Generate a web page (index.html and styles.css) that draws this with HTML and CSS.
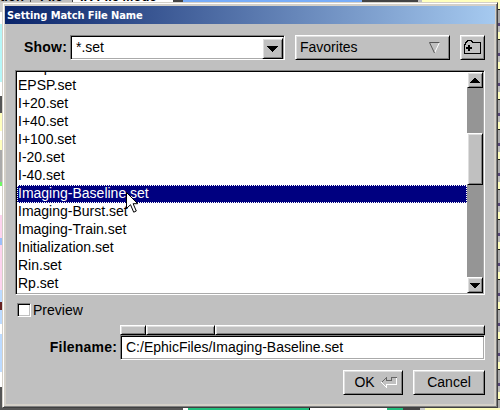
FILE: index.html
```html
<!DOCTYPE html>
<html lang="en">
<head>
<meta charset="utf-8">
<title>Setting Match File Name</title>
<link rel="stylesheet" href="styles.css">
</head>
<body>
<div class="behind-top"><span class="b1">tion</span><span class="b2">File</span><span class="b3">IR File Mode</span><span class="b4"></span><span class="b5"></span><span class="b6"></span><span class="b7"></span></div>
<div class="middle">
<div class="behind-left"></div>
<main class="dialog">
  <header class="title">Setting Match File Name</header>
  <section class="content">
    <div class="toolbar">
      <label class="label">Show:</label>
      <div class="combo"><span>*.set</span><button class="drop"><svg width="11" height="6" shape-rendering="crispEdges"><path d="M0 0H11V1H10V2H9V3H8V4H7V5H6V6H5V5H4V4H3V3H2V2H1V1H0Z"/></svg></button></div>
      <button class="button favorites"><span>Favorites</span><svg width="11" height="12"><path d="M10.5 .5L5.5 11" fill="none" stroke="#fff"/><path d="M10.5 .5H.5L5.5 11" fill="none" stroke="#555"/></svg></button>
      <button class="button folder"><svg width="17" height="15" fill="none" shape-rendering="crispEdges"><path d="M.5 13.5V4.5H1.5V2.5H2.5V1.5H3.5V.5H7.5V1.5H8.5V2.5H16.5V13.5Z" stroke="#000"/><path d="M2 8H8M5 5V11" stroke="#000" stroke-width="2"/></svg></button>
    </div>
    <div class="list">
      <ul class="rows">
        <li class="clipped"><span>Deep.set</span></li>
        <li>EPSP.set</li><li>I+20.set</li><li>I+40.set</li><li>I+100.set</li><li>I-20.set</li><li>I-40.set</li>
        <li class="selected">Imaging-Baseline.set</li>
        <li>Imaging-Burst.set</li><li>Imaging-Train.set</li><li>Initialization.set</li><li>Rin.set</li><li>Rp.set</li>
      </ul>
      <div class="scroll">
        <button class="arrow"><svg width="10" height="5" shape-rendering="crispEdges"><path d="M0 5V4H1V3H2V2H3V1H4V0H6V1H7V2H8V3H9V4H10V5Z"/></svg></button>
        <div class="track"><div class="thumb"></div></div>
        <button class="arrow"><svg width="10" height="5" shape-rendering="crispEdges"><path d="M0 0V1H1V2H2V3H3V4H4V5H6V4H7V3H8V2H9V1H10V0Z"/></svg></button>
      </div>
    </div>
    <div class="preview"><span class="check"></span><span>Preview</span></div>
    <div class="filename">
      <label class="label">Filename:</label>
      <div class="field">
        <div class="path"><i></i><i></i><i></i></div>
        <div class="input">C:/EphicFiles/Imaging-Baseline.set</div>
      </div>
    </div>
    <div class="actions">
      <button class="button ok"><span>OK</span><svg width="16" height="11" fill="none" shape-rendering="crispEdges"><path d="M15.5 .5V7.5H5.5V10.5L.5 5.5" stroke="#fff"/><path d="M.5 5.5L5.5 .5V3.5H10.5V.5H15.5" stroke="#666"/></svg></button>
      <button class="button cancel">Cancel</button>
    </div>
  </section>
</main>
<div class="behind-right"></div>
</div>
<div class="behind-bottom"></div>
<svg class="pointer" width="12" height="21"><path d="M.5 .5V16.5L4.5 12.7L7.7 20.2L10.3 19L7.1 11.7H11.7Z" fill="#fff" stroke="#000"/></svg>
</body>
</html>
```
FILE: styles.css
```css
*{box-sizing:border-box}
body{margin:0;width:500px;height:410px;overflow:hidden;background:#c0c0c0;font:14px/18px "Liberation Sans",Arial,sans-serif;color:#000}
button{font:inherit;color:inherit;padding:0;margin:0;border-radius:0}
svg{display:block;flex:none}
.behind-top{height:2px;overflow:hidden;display:flex;background:#c0c0c0;line-height:18px;font-weight:bold;font-size:13px}
.behind-top span{height:18px;margin-top:-12px;flex:none;white-space:nowrap;overflow:hidden}
.b1{width:31px;border-right:1px solid #444}
.b2{width:42px;padding-left:9px;border-right:1px solid #444}
.b3{width:100px;padding-left:7px;background:#fff}
.b4{width:10px;background:#444}
.b5{width:179px;background:#79adf8}
.b6{width:60px;background:#444;border-right:4px solid #c0c0c0}
.b7{width:78px;background:#ffffbd}
.middle{display:flex;height:406px}
.behind-left{width:2px;background:linear-gradient(#ccc 0 10px,#fff 10px 22px,#b7f7f8 22px 80px,#fff 80px 94px,#555 94px 111px,#ffffbe 111px 129px,#fff 129px 138px,#ffffbe 138px 148px,#aaa 148px 180px,#6ff866 180px 184px,#fff 184px 213px,#fcd3ee 213px 236px,#9cbefa 236px 243px,#fcd3ee 243px 288px,#bddbff 288px 300px,#622 300px 308px,#bddbff 308px 322px,#fff 322px 332px,#bddbff 332px 370px,#fff 370px 385px,#555 385px)}
.behind-right{width:2px;background:repeating-linear-gradient(#ffffbd 0 7px,#222 7px 8px,#aaa 8px 21px,#547 21px 24px,#bbb 24px 30px)}
.behind-bottom{height:2px;background:linear-gradient(90deg,#555 0 183px,#fff 183px 188px,#20bd7b 188px 309px,#000 309px 310px,#fff 310px 387px,#20bd7b 387px 403px,#444 403px 420px,#ccc 420px 425px,#ffffbd 425px)}
.dialog{width:496px;height:406px;background:#c0c0c0;border:1px solid #d4d0c8;border-right-color:#404040;border-bottom-color:#404040;box-shadow:inset 1px 1px #fff,inset -1px -1px #808080,inset 0 0 0 3px #d4d0c8;padding:3px 2px}
.title{height:18px;background:linear-gradient(90deg,#0a246a,#a6caf0);color:#fff;font:bold 11px/19px "DejaVu Sans Condensed","DejaVu Sans",sans-serif;padding-left:2px;letter-spacing:-.08px}
.content{padding:11px 10px 0;height:380px}
.toolbar{display:flex;height:25px}
.label{font-weight:bold;text-align:right;letter-spacing:.2px}
.toolbar .label{width:52px;line-height:24px;margin-right:3px}
.combo,.list,.input{border:1px solid;border-color:#808080 #fff #fff #808080;box-shadow:inset 1px 1px #000,inset -1px -1px #aaa;background:#fff}
.combo{width:215px;height:25px;padding:2px 1px 1px 5px;display:flex;line-height:19px}
.combo>span{flex:1}
.button,.drop,.arrow,.thumb{background:#c0c0c0;border:1px solid;border-color:#fff #000 #000 #fff;box-shadow:inset 1px 1px #dedede,inset -1px -1px #808080;display:flex;align-items:center;justify-content:center}
.button>span{margin-top:-1px}
.drop{width:21px;height:21px}
.favorites{width:155px;height:25px;margin-left:10px;justify-content:space-between;padding:0 9px 0 4px}
.folder{width:25px;height:25px;margin-left:10px}
.list{height:225px;margin-top:10px;padding:1px 1px 1px 2px;display:flex}
.rows{list-style:none;margin:0 0 0 -1px;padding:0;width:451px;height:221px;overflow:hidden}
.rows li{height:18px;padding-left:1px;line-height:16px}
.rows .clipped{height:5px;overflow:hidden}
.clipped span{display:block;margin-top:-13px}
.rows .selected{background:#000080;color:#fff;border:1px dotted #fff;line-height:14px;padding-left:0}
.scroll{width:16px;height:221px;display:flex;flex-direction:column}
.arrow{width:16px;height:16px;flex:none}
.track{flex:1;background:#959595;padding-top:45px}
.thumb{height:52px}
.preview{display:flex;align-items:center;height:18px;margin:6px 0 0 2px}
.check{width:14px;height:14px;background:#fff;border:1px solid;border-color:#808080 #fff #fff #808080;box-shadow:inset 1px 1px #000,inset -1px -1px #c0c0c0;margin-right:2px}
.filename{display:flex;margin-top:6px;height:35px}
.filename .label{width:102px;padding-top:13px;margin-right:3px}
.field{width:365px}
.path{height:10px;display:flex}
.path i{height:10px;border:1px solid;border-color:#fff #000 #000 #fff;box-shadow:inset 1px 1px #dedede,inset -1px -1px #808080}
.path i:nth-child(1){width:26px}
.path i:nth-child(2){width:69px}
.path i:nth-child(3){flex:1}
.input{height:25px;line-height:22px;padding-left:5px}
.actions{display:flex;justify-content:flex-end;margin-top:10px}
.button.ok{width:60px;height:25px;gap:6px;padding-left:5px}
.button.cancel{width:72px;height:25px;margin-left:10px;padding-bottom:1px}
.pointer{position:absolute;left:126px;top:192px}
```
